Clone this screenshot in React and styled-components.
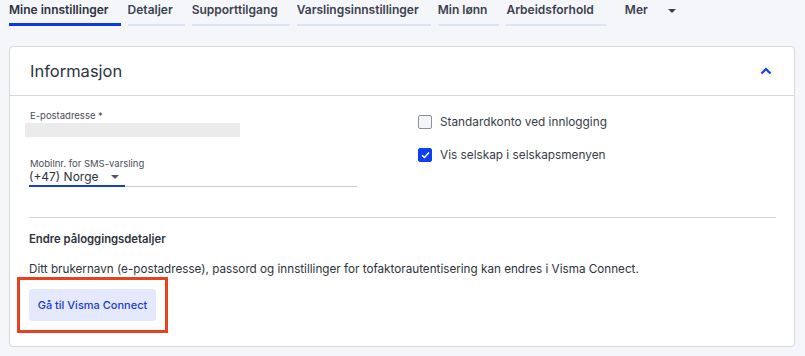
import styled, { createGlobalStyle } from "styled-components";

const GlobalStyle = createGlobalStyle`
  body {
    margin: 0;
    background: #f5f6fa;
    font-family: Inter, "Open Sans", sans-serif;
    color: #333842;
  }
`;

const Page = styled.div`
  width: 805px;
  height: 356px;
  box-sizing: border-box;
  padding: 0 10px 0 9px;
`;

const TabList = styled.nav`
  display: flex;
  height: 26px;
  gap: 7px;
`;

const Tab = styled.div`
  box-sizing: border-box;
  height: 26px;
  padding: 2px 12px 0 0;
  font-size: 12px;
  font-weight: 600;
  line-height: 16px;
  color: ${props => (props.$active ? "#2c3140" : "#3b4150")};
  border-bottom: ${props =>
    props.$active ? "3px solid #0a3ae6" : "2px solid #dde3f7"};
  border-bottom: ${props => props.$plain && "none"};
  margin-left: ${props => (props.$plain ? "12px" : "0")};
  display: flex;
  align-items: flex-start;
  gap: 20px;
`;

const Caret = styled.span`
  flex: none;
  width: 0;
  height: 0;
  margin-top: ${props => props.$top || "7px"};
  border-left: 4px solid transparent;
  border-right: 4px solid transparent;
  border-top: 4px solid ${props => props.$color || "#3b4150"};
`;

const Card = styled.section`
  margin-top: 20px;
  background: #fff;
  border: 1px solid #d6d8de;
  border-radius: 4px;
  height: 301px;
  box-sizing: border-box;
`;

const CardHeader = styled.header`
  height: 48px;
  border-bottom: 1px solid #d6d8de;
  display: flex;
  align-items: center;
  justify-content: space-between;
  padding: 0 22px 0 20px;
`;

const Title = styled.h2`
  margin: 0;
  font-size: 16.5px;
  font-weight: 400;
  color: #2e333d;
`;

const CardBody = styled.div`
  padding: 14px 18px 0 19px;
`;

const Columns = styled.div`
  display: grid;
  grid-template-columns: 389px 1fr;
`;

const Column = styled.div`
  display: flex;
  flex-direction: column;
`;

const Label = styled.label`
  font-size: 9.5px;
  line-height: 12px;
  color: #4a4e56;
  padding-left: 1px;
  margin-top: ${props => props.$top || "0"};
`;

const Redacted = styled.div`
  margin: 1px 0 0 -4px;
  width: 215px;
  height: 14px;
  background: #ebebeb;
`;

const SelectRow = styled.div`
  display: flex;
  align-items: flex-end;
  width: 328px;
`;

const Select = styled.div`
  width: 96px;
  box-sizing: border-box;
  display: flex;
  align-items: center;
  justify-content: space-between;
  padding: 0 6px 1px 0;
  font-size: 12px;
  line-height: 14px;
  color: #2e333d;
  white-space: nowrap;
  border-bottom: 2px solid #1a3fc7;
`;

const SelectRest = styled.div`
  flex: 1;
  border-bottom: 1px solid #c9cbd0;
`;

const CheckRow = styled.label`
  display: flex;
  align-items: center;
  gap: 8px;
  height: 20px;
  font-size: 11.8px;
  color: #383d48;
  margin-top: ${props => props.$top || "0"};
`;

const Box = styled.span`
  width: 14px;
  height: 14px;
  box-sizing: border-box;
  border-radius: 2px;
  border: 1px solid ${props => (props.$checked ? "#0f3ff0" : "#8c9099")};
  background: ${props => (props.$checked ? "#0f3ff0" : "#f4f5f8")};
  display: flex;
  align-items: center;
  justify-content: center;
`;

const Divider = styled.hr`
  margin: 30px 0 0;
  border: none;
  border-top: 1px solid #d2d4d8;
`;

const SubTitle = styled.h3`
  margin: 14px 0 0;
  font-size: 11.3px;
  line-height: 14px;
  font-weight: 600;
  color: #2e333d;
`;

const Text = styled.p`
  margin: 16px 0 0;
  font-size: 11.7px;
  line-height: 14px;
  color: #2e333d;
`;

const Highlight = styled.div`
  display: inline-block;
  margin-top: 13px;
  outline: 3px solid #e8411d;
  outline-offset: 9px;
`;

const Button = styled.button`
  display: block;
  height: 32px;
  width: 127px;
  padding: 0;
  border: none;
  border-radius: 3px;
  background: #e4e9fd;
  color: #1a3bd0;
  font-family: Inter, sans-serif;
  font-size: 11px;
  font-weight: 500;
`;

const tabs = [
  "Mine innstillinger",
  "Detaljer",
  "Supporttilgang",
  "Varslingsinnstillinger",
  "Min lønn",
  "Arbeidsforhold",
];

const App = () => {
  return (
    <Page>
      <GlobalStyle />
      <TabList>
        {tabs.map((tab, i) => (
          <Tab key={tab} $active={i === 0}>
            {tab}
          </Tab>
        ))}
        <Tab $plain>
          Mer
          <Caret />
        </Tab>
      </TabList>
      <Card>
        <CardHeader>
          <Title>Informasjon</Title>
          <svg width="12" height="8" viewBox="0 0 12 8">
            <polyline
              points="1.5,6.5 6,2 10.5,6.5"
              fill="none"
              stroke="#0f3ff0"
              strokeWidth="2.2"
            />
          </svg>
        </CardHeader>
        <CardBody>
          <Columns>
            <Column>
              <Label>E-postadresse *</Label>
              <Redacted />
              <Label $top="21px">Mobilnr. for SMS-varsling</Label>
              <SelectRow>
                <Select>
                  (+47) Norge
                  <Caret $color="#55595f" $top="0" />
                </Select>
                <SelectRest />
              </SelectRow>
            </Column>
            <Column>
              <CheckRow $top="2px">
                <Box />
                Standardkonto ved innlogging
              </CheckRow>
              <CheckRow $top="13px">
                <Box $checked>
                  <svg width="9" height="8" viewBox="0 0 9 8">
                    <polyline
                      points="1,4.2 3.4,6.4 8,1.4"
                      fill="none"
                      stroke="#fff"
                      strokeWidth="1.5"
                    />
                  </svg>
                </Box>
                Vis selskap i selskapsmenyen
              </CheckRow>
            </Column>
          </Columns>
          <Divider />
          <SubTitle>Endre påloggingsdetaljer</SubTitle>
          <Text>
            Ditt brukernavn (e-postadresse), passord og innstillinger for
            tofaktorautentisering kan endres i Visma Connect.
          </Text>
          <Highlight>
            <Button>Gå til Visma Connect</Button>
          </Highlight>
        </CardBody>
      </Card>
    </Page>
  );
};

export default App;
